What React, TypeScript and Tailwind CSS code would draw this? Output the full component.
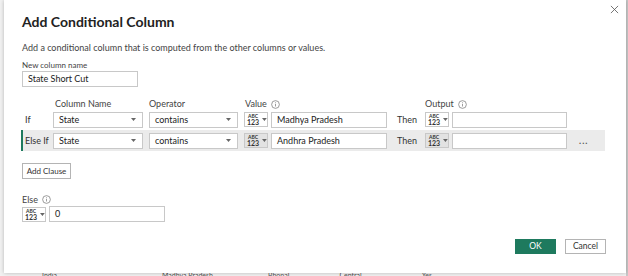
import React from "react";

const font = { fontFamily: 'Lato, "Open Sans", "Liberation Sans", sans-serif' };

function Info() {
    return (
        <svg width="9" height="9" viewBox="0 0 10 10" className="ml-1 inline-block">
            <circle cx="5" cy="5" r="4.3" fill="none" stroke="#777" strokeWidth="0.8" />
            <rect x="4.6" y="4.2" width="0.8" height="3" fill="#777" />
            <rect x="4.6" y="2.6" width="0.8" height="0.8" fill="#777" />
        </svg>
    );
}

function Caret() {
    return (
        <svg width="5" height="3" viewBox="0 0 5 3">
            <path d="M0 0 L5 0 L2.5 3 Z" fill="#666" />
        </svg>
    );
}

function TypeButton({ shaded }: { shaded?: boolean }) {
    return (
        <div className={`flex h-[15px] w-[24px] items-center gap-[3px] border border-[#c8c8c8] pl-[2px] ${shaded ? "bg-[#e2e2e2]" : "bg-white"}`}>
            <div className="flex flex-col items-center leading-none text-[#333]">
                <span className="text-[5px] font-bold leading-[5px]">ABC</span>
                <span className="text-[7px] font-bold leading-[6px]">123</span>
            </div>
            <Caret />
        </div>
    );
}

function Select({ value, width }: { value: string; width: string }) {
    return (
        <div className={`flex h-[16px] ${width} items-center justify-between border border-[#c8c8c8] bg-white pl-[5px] pr-[6px] text-[9px] text-[#222]`}>
            <span>{value}</span>
            <Caret />
        </div>
    );
}

function Input({ value, width }: { value: string; width: string }) {
    return (
        <div className={`flex h-[16px] ${width} items-center border border-[#c8c8c8] bg-white px-[5px] text-[9px] text-[#222]`}>
            {value}
        </div>
    );
}

function ClauseRow({ label, value, shaded }: { label: string; value: string; shaded?: boolean }) {
    return (
        <div className={`flex h-[21px] w-[584px] items-center ${shaded ? "border-l-2 border-[#1e7a5e] bg-[#ebebeb]" : "border-l-2 border-transparent"}`}>
            <span className="w-[30px] pl-[2px] text-[9px] text-[#333]">{label}</span>
            <Select value="State" width="w-[90px]" />
            <div className="w-[6px]" />
            <Select value="contains" width="w-[89px]" />
            <div className="w-[6px]" />
            <TypeButton shaded={shaded} />
            <div className="w-[3px]" />
            <Input value={value} width="w-[116px]" />
            <span className="w-[38px] pl-[10px] text-[9px] text-[#333]">Then</span>
            <TypeButton shaded={shaded} />
            <div className="w-[3px]" />
            <Input value="" width="w-[115px]" />
            {shaded && <span className="ml-[12px] text-[9px] font-bold tracking-[1px] text-[#555]">...</span>}
        </div>
    );
}

export default function App() {
    return (
        <div className="relative h-[276px] w-[628px] overflow-hidden bg-[#f2f2f2]" style={font}>
            {/* background table peeking out */}
            <div className="absolute bottom-0 left-0 flex h-[4px] w-full items-start text-[7px] leading-[7px] text-[#555]">
                <span className="ml-[42px]">India</span>
                <span className="ml-[105px]">Madhya Pradesh</span>
                <span className="ml-[55px]">Bhopal</span>
                <span className="ml-[50px]">Central</span>
                <span className="ml-[60px]">Yes</span>
            </div>
            <div className="absolute right-0 top-0 h-full w-[2px] bg-[#c9c9c9]" />

            <div className="relative ml-[4px] flex h-[273px] w-[622px] flex-col bg-white pl-[18px] pt-[13px] shadow-[0_0_4px_rgba(0,0,0,0.25)]">
                <svg width="9" height="9" viewBox="0 0 10 10" className="absolute right-[7px] top-[5px]">
                    <path d="M1 1 L9 9 M9 1 L1 9" stroke="#555" strokeWidth="0.9" />
                </svg>

                <h1 className="text-[14px] font-bold leading-[18px] text-[#222]">Add Conditional Column</h1>
                <p className="mt-[11px] text-[9px] leading-[12px] text-[#444]">
                    Add a conditional column that is computed from the other columns or values.
                </p>

                <span className="mt-[6px] text-[8px] leading-[10px] text-[#444]">New column name</span>
                <div className="mt-[1px] flex">
                    <Input value="State Short Cut" width="w-[116px]" />
                </div>

                <div className="mt-[11px] flex h-[12px] items-center pl-[33px] text-[9px] text-[#444]">
                    <span className="w-[94px]">Column Name</span>
                    <span className="w-[96px]">Operator</span>
                    <span className="flex w-[180px] items-center">Value<Info /></span>
                    <span className="flex items-center">Output<Info /></span>
                </div>

                <div className="-ml-[1px] -mt-[1px] flex flex-col">
                    <ClauseRow label="If" value="Madhya Pradesh" />
                    <ClauseRow label="Else If" value="Andhra Pradesh" shaded />
                </div>

                <div className="mt-[12px] flex">
                    <button className="h-[16px] w-[49px] border border-[#b4b4b4] bg-white text-[8px] text-[#333]">Add Clause</button>
                </div>

                <span className="mt-[15px] flex items-center text-[9px] leading-[11px] text-[#444]">Else<Info /></span>
                <div className="mt-[1px] flex items-center gap-[3px]">
                    <TypeButton />
                    <Input value="0" width="w-[116px]" />
                </div>

                <div className="mt-[17px] flex justify-end gap-[9px] pr-[20px]">
                    <button className="h-[15px] w-[41px] bg-[#1e7a5e] text-[8.5px] text-white">OK</button>
                    <button className="h-[15px] w-[41px] border border-[#b4b4b4] bg-white text-[8.5px] text-[#333]">Cancel</button>
                </div>
            </div>
        </div>
    );
}
